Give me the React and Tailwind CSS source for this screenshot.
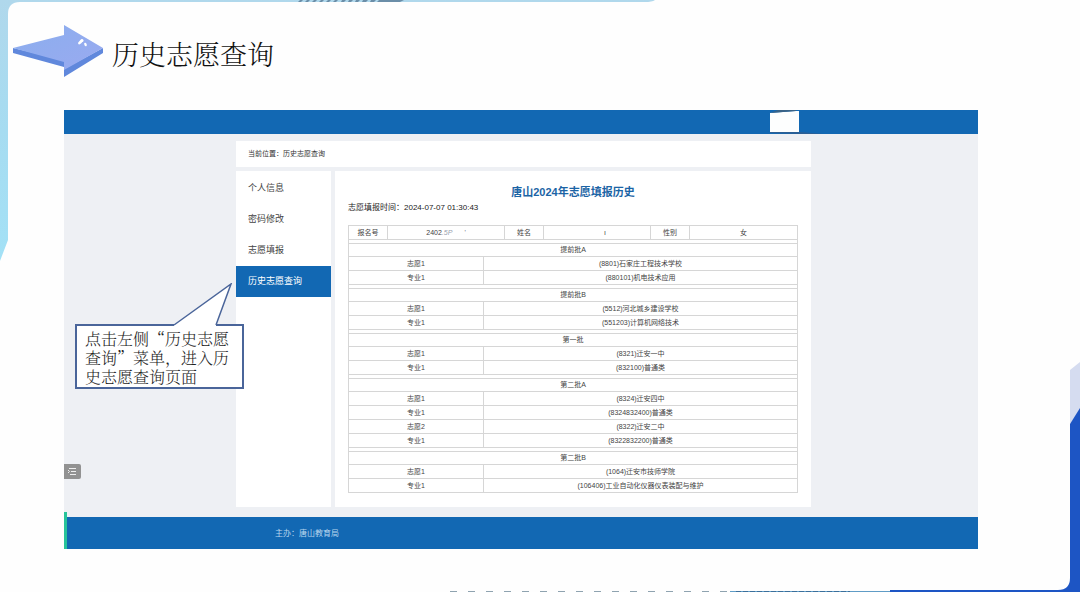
import React from 'react';

const menuItems = [
  { label: '个人信息' },
  { label: '密码修改' },
  { label: '志愿填报' },
  { label: '历史志愿查询', active: true },
];

const batches = [
  {
    name: '提前批A',
    rows: [
      ['志愿1', '(8801)石家庄工程技术学校'],
      ['专业1', '(880101)机电技术应用'],
    ],
  },
  {
    name: '提前批B',
    rows: [
      ['志愿1', '(5512)河北城乡建设学校'],
      ['专业1', '(551203)计算机网络技术'],
    ],
  },
  {
    name: '第一批',
    rows: [
      ['志愿1', '(8321)迁安一中'],
      ['专业1', '(832100)普通类'],
    ],
  },
  {
    name: '第二批A',
    rows: [
      ['志愿1', '(8324)迁安四中'],
      ['专业1', '(8324832400)普通类'],
      ['志愿2', '(8322)迁安二中'],
      ['专业1', '(8322832200)普通类'],
    ],
  },
  {
    name: '第二批B',
    rows: [
      ['志愿1', '(1064)迁安市技师学院'],
      ['专业1', '(106406)工业自动化仪器仪表装配与维护'],
    ],
  },
];

const cell = 'border border-[#d6d6d6] p-0 font-normal';

function SlideFrame() {
  return (
    <div className="absolute inset-0 overflow-hidden pointer-events-none">
      <svg className="absolute left-0 top-0" width="660" height="262" viewBox="0 0 660 262">
        <defs>
          <linearGradient id="edge" x1="0" y1="0" x2="0" y2="1">
            <stop offset="0" stopColor="#b0d8ec" />
            <stop offset="0.5" stopColor="#a6dcf1" />
            <stop offset="1" stopColor="#a3e1f6" />
          </linearGradient>
        </defs>
        <path d="M0 0H655Q652 2 645 2H20Q8 2 8 14V240L0 261Z" fill="url(#edge)" />
        <path d="M300 0h3l-2 2h-3zM307 0h3l-2 2h-3zM314 0h3l-2 2h-3zM321 0h3l-2 2h-3zM328 0h3l-2 2h-3zM335 0h3l-2 2h-3zM342 0h4l-2 2h-3zM349 0h4l-2 2h-3zM356 0h4l-2 2h-3zM363 0h5l-2 2h-4zM371 0h5l-2 2h-4zM379 0h25l-4 2h-23z" fill="#6b8ea8" />
      </svg>
      <svg className="absolute right-0 bottom-0" width="640" height="232" viewBox="0 0 640 232">
        <path d="M630 10L640 2V50L630 64Z" fill="#d5dcf0" />
        <path d="M630 64L640 48V232H450V230H618Q630 230 630 218Z" fill="#1d55c4" />
        <path d="M290 231H450V232H290Z" fill="#5f9cc6" />
        <path d="M10 231.500H290" stroke="#8fa3b0" strokeWidth="1" strokeDasharray="7 11" />
        <path d="M296 231.500H410" stroke="#3b6f9b" strokeWidth="1" strokeDasharray="5 2" />
      </svg>
    </div>
  );
}

function ArrowMark() {
  return (
    <svg width="92" height="54" viewBox="0 0 92 54" className="shrink-0">
      <defs>
        <linearGradient id="arrow" x1="0" y1="0" x2="1" y2="1">
          <stop offset="0" stopColor="#8aaeee" />
          <stop offset="1" stopColor="#9aaaf0" />
        </linearGradient>
      </defs>
      <path d="M1 24L52 36V43L1 29Z" fill="#6088dc" />
      <path d="M52 45L91 24V29L52 53Z" fill="#6088dc" />
      <path d="M1 24L52 11V1L91 24L52 46V38Z" fill="url(#arrow)" />
      <ellipse cx="68.500" cy="18" rx="3" ry="1.500" transform="rotate(-42 68.5 18)" fill="#fff" />
      <ellipse cx="73.500" cy="20.500" rx="1.200" ry="1.800" transform="rotate(-25 73.5 20.5)" fill="#fff" />
      <circle cx="70" cy="16.500" r="1.500" fill="#fff" />
    </svg>
  );
}

function Callout() {
  return (
    <div className="absolute left-[11px] top-[214px] w-[169px] h-[65px] border-2 border-[#4a659a] bg-white px-2 pt-[3px] text-base leading-[19px] font-light text-[#222] font-['Noto_Serif_CJK_SC','Noto_Sans_CJK_SC',serif]">
      <svg className="absolute left-[96px] -top-[43px]" width="62" height="44" viewBox="0 0 62 44">
        <path d="M1 42L58 1L43 42V44H1Z" fill="#fff" />
        <path d="M1 42L58 1L43 42" fill="none" stroke="#4a659a" strokeWidth="1.5" />
      </svg>
      <p>点击左侧“历史志愿查询”菜单，进入历史志愿查询页面</p>
    </div>
  );
}

function Sidebar() {
  return (
    <nav className="w-[95px] shrink-0 bg-white pt-0.5">
      {menuItems.map((item) => (
        <a
          key={item.label}
          href="#"
          className={`flex items-center h-[31px] pl-3 text-[9px] ${item.active ? 'bg-[#1268b3] text-white' : 'text-[#444]'}`}
        >
          {item.label}
        </a>
      ))}
    </nav>
  );
}

function HistoryTable() {
  return (
    <table className="w-full table-fixed border-collapse text-center text-[7px] leading-[12px] text-[#444]">
      <colgroup>
        <col className="w-[39px]" />
        <col className="w-[96px]" />
        <col className="w-[21px]" />
        <col className="w-[39px]" />
        <col className="w-[107px]" />
        <col className="w-[39px]" />
        <col />
      </colgroup>
      <tbody>
        <tr className="h-[14px]">
          <th className={cell}>报名号</th>
          <td className={cell} colSpan={2}>
            2402<span className="text-gray-400 italic">.5P</span>
            <span className="pl-3 text-gray-500">'</span>
          </td>
          <th className={cell}>姓名</th>
          <td className={`${cell} pl-4`}>ı</td>
          <th className={cell}>性别</th>
          <td className={cell}>女</td>
        </tr>
      </tbody>
      {batches.map((batch) => (
        <tbody key={batch.name}>
          <tr className="h-[4px]">
            <td className={cell} colSpan={7}></td>
          </tr>
          <tr className="h-[13px]">
            <th className={cell} colSpan={7}>{batch.name}</th>
          </tr>
          {batch.rows.map(([label, value], i) => (
            <tr key={i} className="h-[14px]">
              <td className={cell} colSpan={2}>{label}</td>
              <td className={cell} colSpan={5}>{value}</td>
            </tr>
          ))}
        </tbody>
      ))}
    </table>
  );
}

export default function App() {
  return (
    <div className="relative min-h-screen bg-[#fefefe] font-['Liberation_Sans','Noto_Sans_CJK_SC',sans-serif]">
      <SlideFrame />

      <header className="relative flex items-center h-[110px] pl-3 pb-2 gap-2">
        <ArrowMark />
        <h1 className="pt-1.5 text-[27px] font-light text-[#111] font-['Noto_Serif_CJK_SC','Noto_Sans_CJK_SC',serif]">历史志愿查询</h1>
      </header>

      <section className="relative ml-[64px] mr-[102px] bg-[#eef0f4]">
        {/* Top bar with the masked user name */}
        <div className="flex justify-end h-6 bg-[#1268b3] pr-[154px]">
          <svg width="54" height="24" viewBox="0 0 54 24">
            <path d="M0 3L26 1H29V22H0Z" fill="#fdfefe" />
            <path d="M0 3L26 1V0H8Z" fill="#3a6387" />
            <path d="M0 22H30L54 24H30L0 23Z" fill="#2c5f94" />
          </svg>
        </div>

        <div className="ml-[172px] mr-[167px] pt-[7px] pb-[10px] flex flex-col gap-1">
          <div className="flex items-center h-[26px] bg-white pl-3 text-[7px] text-[#333]">
            <span>当前位置：</span>
            <span>历史志愿查询</span>
          </div>
          <div className="flex gap-1">
            <Sidebar />
            <main className="flex-1 min-w-0 bg-white px-[13px] pt-3 pb-[14px]">
              <h2 className="text-center text-[11px] leading-[18px] font-bold text-[#1b64a5]">唐山2024年志愿填报历史</h2>
              <p className="mb-[10px] text-[8px] leading-[14px] text-[#222]">志愿填报时间：2024-07-07 01:30:43</p>
              <HistoryTable />
            </main>
          </div>
        </div>

        <footer className="flex items-center h-8 bg-[#1268b3] pl-[211px] pt-0.5 text-[8px] text-[#b9d6ee]">
          主办：唐山教育局
        </footer>
        <div className="absolute left-0 bottom-0 w-[3px] h-[37px] bg-[#27c39a]"></div>

        <button
          aria-label="菜单"
          className="absolute left-0 bottom-[70px] w-[17px] h-[15px] flex items-center justify-center rounded-r-xs bg-[#929292]"
        >
          <svg width="9" height="9" viewBox="0 0 9 9" fill="none" stroke="#eee">
            <path d="M1 1.5H8M3 4.5H8M2 7.5H8M0 3l1.500 1.500L0 6" />
          </svg>
        </button>

        <Callout />
      </section>
    </div>
  );
}
